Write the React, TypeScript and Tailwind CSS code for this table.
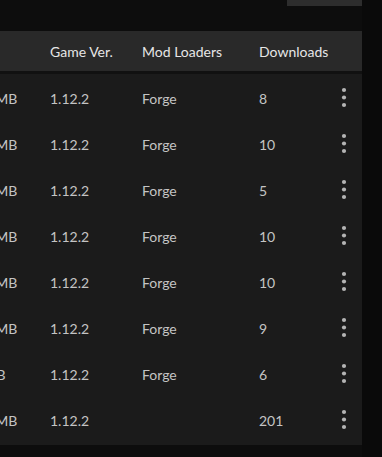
import React from 'react';

interface FileRow {
  size: string;
  gameVersion: string;
  loader: string;
  downloads: number;
}

const rows: FileRow[] = [
  { size: '1.45 MB', gameVersion: '1.12.2', loader: 'Forge', downloads: 8 },
  { size: '1.44 MB', gameVersion: '1.12.2', loader: 'Forge', downloads: 10 },
  { size: '1.44 MB', gameVersion: '1.12.2', loader: 'Forge', downloads: 5 },
  { size: '1.43 MB', gameVersion: '1.12.2', loader: 'Forge', downloads: 10 },
  { size: '1.41 MB', gameVersion: '1.12.2', loader: 'Forge', downloads: 10 },
  { size: '1.40 MB', gameVersion: '1.12.2', loader: 'Forge', downloads: 9 },
  { size: '9.8 KB', gameVersion: '1.12.2', loader: 'Forge', downloads: 6 },
  { size: '1.38 MB', gameVersion: '1.12.2', loader: '', downloads: 201 },
];

const MoreIcon = () => (
  <svg width="6" height="22" viewBox="0 0 6 22" fill="#b4b4b4">
    <circle cx="3" cy="3" r="2.1" />
    <circle cx="3" cy="10.5" r="2.1" />
    <circle cx="3" cy="18" r="2.1" />
  </svg>
);

export default function App() {
  return (
    <div
      className="flex w-[382px] h-[457px] overflow-hidden bg-[#0d0d0d] text-[14px]"
      style={{ fontFamily: 'Lato, "Open Sans", sans-serif' }}
    >
      <div className="w-[362px] shrink-0 flex flex-col overflow-hidden">
        {/* top actions */}
        <div className="h-[31px] flex justify-end items-start">
          <button className="w-[75px] h-[6px] bg-[#2d2d2d]" aria-label="Filter" />
        </div>

        {/* table */}
        <div className="bg-[#1b1b1b] pb-[1px]">
          <div className="h-[40px] bg-[#292929] flex items-center text-[#e6e6e6]">
            <div className="w-[50px] shrink-0" />
            <div className="w-[92px] shrink-0">Game Ver.</div>
            <div className="w-[117px] shrink-0">Mod Loaders</div>
            <div className="flex-1">Downloads</div>
          </div>
          <div className="h-[3px] bg-[#111111]" />
          <div className="pt-[1px] pb-[1px]">
            {rows.map((r, i) => (
              <div key={i} className="h-[46px] flex items-center text-[#c4c4c4]">
                <div className="w-[50px] shrink-0 overflow-hidden whitespace-nowrap">
                  <span className="block ml-[-36px]">{r.size}</span>
                </div>
                <div className="w-[92px] shrink-0">{r.gameVersion}</div>
                <div className="w-[117px] shrink-0">{r.loader}</div>
                <div className="w-[82px] shrink-0">{r.downloads}</div>
                <div className="w-[6px] flex items-center">
                  <MoreIcon />
                </div>
              </div>
            ))}
          </div>
        </div>
      </div>
      <div className="flex-1 bg-[#0a0a0a]" />
    </div>
  );
}
